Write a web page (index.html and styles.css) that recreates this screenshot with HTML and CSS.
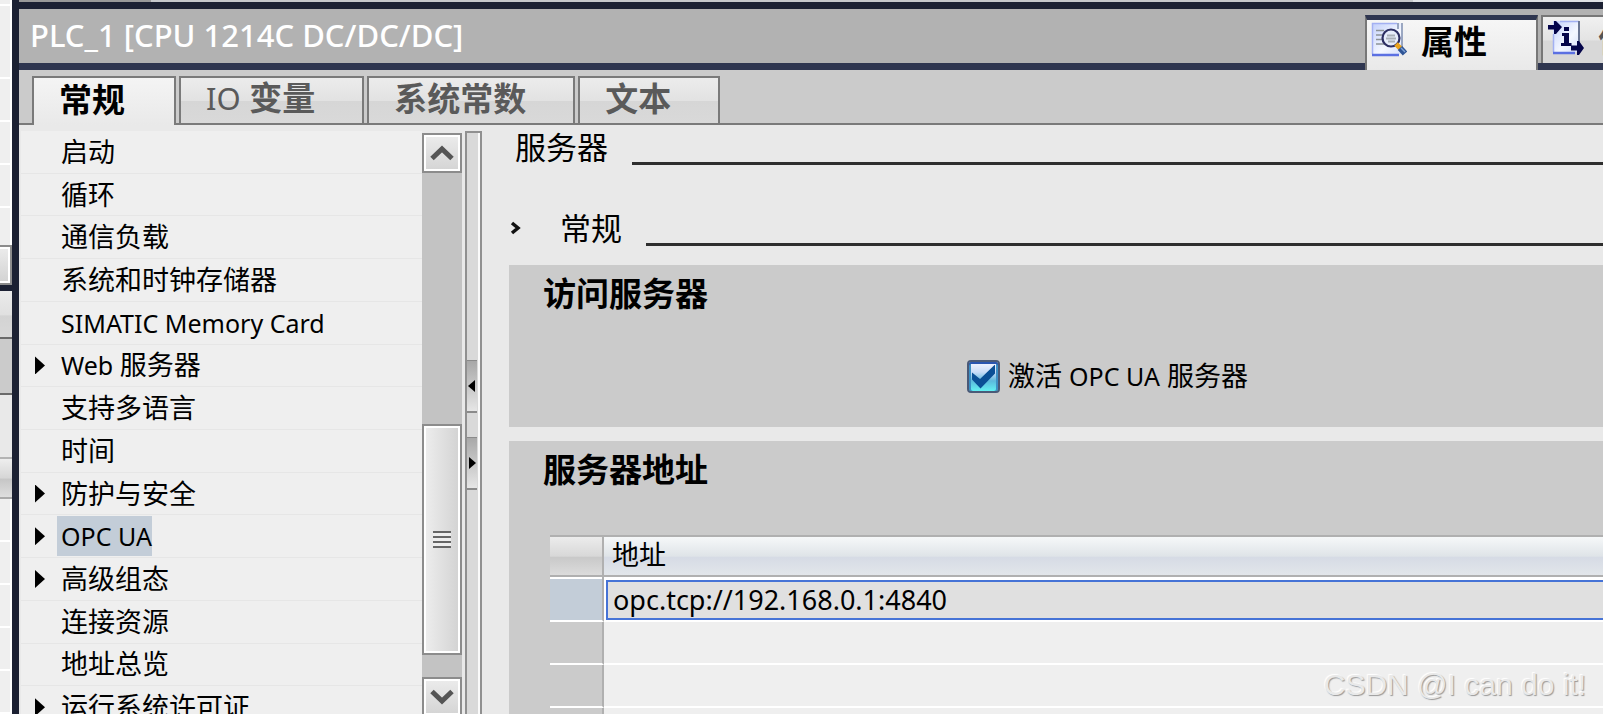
FILE: index.html
```html
<!DOCTYPE html>
<html lang="zh-CN">
<head>
<meta charset="utf-8">
<title>PLC_1 [CPU 1214C DC/DC/DC]</title>
<link rel="stylesheet" href="styles.css">
</head>
<body>
<div class="app">
  <aside class="neighbour">
    <div class="nb-rows nb-top"></div>
    <div class="nb-corner"></div>
    <div class="nb-gap"></div>
    <div class="nb-head"></div>
    <div class="nb-bar"></div>
    <div class="nb-blank"></div>
    <div class="nb-colhead"></div>
    <div class="nb-rows nb-bottom"></div>
  </aside>
  <main class="inspector">
    <div class="above"><i class="above-left"></i><i class="above-mid"></i><i class="above-right"></i></div>
    <header class="titlebar">
      <h1 class="title">PLC_1 [CPU 1214C DC/DC/DC]</h1>
      <div class="views" role="tablist">
        <button class="view view-on" role="tab" aria-selected="true">
          <svg class="view-icon" viewBox="0 0 36 36" aria-hidden="true">
            <defs><linearGradient id="page" x1="0" y1="0" x2="1" y2="1"><stop offset="0" stop-color="#c3d0fb"/><stop offset=".6" stop-color="#f4f7ff"/><stop offset="1" stop-color="#d5defb"/></linearGradient></defs>
            <path d="M1 1h28l3 3v28H1z" fill="url(#page)"/>
            <path d="M1.500 32V1.500H26" fill="none" stroke="#a3b0f2" stroke-width="1.500"/>
            <path d="M27 1v6M31 1v24" stroke="#7f8fae" stroke-width="1.500"/>
            <path d="M1 33h27" stroke="#5b70e2" stroke-width="2.500"/>
            <path d="M5 8.500h8M5 13h6M5 17.500h6M5 22h8" stroke="#8c9296" stroke-width="1.700"/>
            <circle cx="20" cy="16" r="8.500" fill="#e6ecfb" stroke="#2d2f63" stroke-width="2.200"/>
            <path d="M16 13.500h8M15 16.500h10M17 19.500h7" stroke="#a9b0b8" stroke-width="2"/>
            <path d="M25 22l5 5" stroke="#eaa21c" stroke-width="5"/>
            <path d="M29 26l5 5.500" stroke="#2f5596" stroke-width="6"/>
            <path d="M30 26l4 4" stroke="#7fa3d6" stroke-width="1.500"/>
          </svg>
          属性
        </button>
        <button class="view" role="tab" aria-selected="false">
          <svg class="view-icon" viewBox="0 0 36 36" aria-hidden="true">
            <path d="M5 1h26v31H5z" fill="url(#page)"/>
            <path d="M12 1.500h19" stroke="#a3b0f2" stroke-width="1.500"/>
            <path d="M31 1v23" stroke="#6c7794" stroke-width="2"/>
            <path d="M5.500 14v18" stroke="#a3b0f2" stroke-width="1.500"/>
            <path d="M5 33h22" stroke="#5b70e2" stroke-width="2.500"/>
            <path d="M0 5h6V1h2l6 6-6 7H6V9.500H0z" fill="#05054a"/>
            <path d="M23 25.500h6V21h2l5 7-5 7h-2v-4.500h-6z" fill="#05054a"/>
            <path d="M16 7h5v4h-5zM14 13h7v10h2.500v3H13v-3h3v-7h-2z" fill="#05054a"/>
          </svg>
          信息
        </button>
      </div>
    </header>
    <nav class="tabs" role="tablist">
      <button class="tab tab-on" role="tab" aria-selected="true">常规</button>
      <button class="tab" role="tab"><span class="latin-lg">IO</span> 变量</button>
      <button class="tab" role="tab">系统常数</button>
      <button class="tab" role="tab">文本</button>
    </nav>
    <div class="body">
      <nav class="tree">
        <ul class="tree-list">
          <li class="node"><a class="label" href="#">启动</a></li>
          <li class="node"><a class="label" href="#">循环</a></li>
          <li class="node"><a class="label" href="#">通信负载</a></li>
          <li class="node"><a class="label" href="#">系统和时钟存储器</a></li>
          <li class="node"><a class="label" href="#"><span class="latin">SIMATIC Memory Card</span></a></li>
          <li class="node parent"><a class="label" href="#"><span class="latin">Web </span>服务器</a></li>
          <li class="node"><a class="label" href="#">支持多语言</a></li>
          <li class="node"><a class="label" href="#">时间</a></li>
          <li class="node parent"><a class="label" href="#">防护与安全</a></li>
          <li class="node parent"><a class="label selected" href="#"><span class="latin">OPC UA</span></a></li>
          <li class="node parent"><a class="label" href="#">高级组态</a></li>
          <li class="node"><a class="label" href="#">连接资源</a></li>
          <li class="node"><a class="label" href="#">地址总览</a></li>
          <li class="node parent"><a class="label" href="#">运行系统许可证</a></li>
        </ul>
      </nav>
      <div class="scrollbar">
        <button class="sb-btn" aria-label="向上滚动"><svg class="sb-arrow" viewBox="0 0 24 16" aria-hidden="true"><path d="M2 13.500L12 4l10 9.500" fill="none" stroke="#555" stroke-width="5"/></svg></button>
        <div class="sb-before"></div>
        <div class="sb-thumb"><i class="grip"></i></div>
        <div class="sb-after"></div>
        <button class="sb-btn" aria-label="向下滚动"><svg class="sb-arrow" viewBox="0 0 24 16" aria-hidden="true"><path d="M2 2.500L12 12l10-9.500" fill="none" stroke="#555" stroke-width="5"/></svg></button>
      </div>
      <div class="splitter">
        <button class="split-btn" aria-label="收起"><svg class="split-arrow" viewBox="0 0 8 12" aria-hidden="true"><path d="M7 0v12L0 6z"/></svg></button>
        <button class="split-btn" aria-label="展开"><svg class="split-arrow" viewBox="0 0 8 12" aria-hidden="true"><path d="M1 0v12l7-6z"/></svg></button>
      </div>
      <section class="content">
        <h2 class="heading">服务器</h2>
        <h3 class="heading sub">
          <svg class="chevron" viewBox="0 0 12 14" aria-hidden="true"><path d="M2 2l6 5-6 5" fill="none" stroke="#111" stroke-width="3.500"/></svg>常规</h3>
        <section class="panel">
          <h4 class="panel-title">访问服务器</h4>
          <label class="check"><input class="check-box" type="checkbox" checked><span>激活 <span class="latin">OPC UA</span> 服务器</span></label>
        </section>
        <section class="panel panel-fill">
          <h4 class="panel-title">服务器地址</h4>
          <table class="grid">
            <thead><tr><th class="mark"></th><th class="col">地址</th></tr></thead>
            <tbody>
              <tr><td class="mark mark-on"></td><td class="cell cell-edit"><input class="address" type="text" aria-label="地址" value="opc.tcp://192.168.0.1:4840"></td></tr>
              <tr><td class="mark"></td><td class="cell"></td></tr>
              <tr><td class="mark"></td><td class="cell"></td></tr>
              <tr><td class="mark"></td><td class="cell"></td></tr>
            </tbody>
          </table>
        </section>
      </section>
    </div>
  </main>
  <div class="watermark">CSDN @I can do it!</div>
</div>
</body>
</html>
```
FILE: styles.css
```css
* { box-sizing: border-box; }

body {
  margin: 0;
  font-family: "Noto Sans", "Noto Sans CJK SC", sans-serif;
  font-size: 27px;
  color: #000;
}

button, input {
  font: inherit;
  color: inherit;
  margin: 0;
  border-radius: 0;
}

h1, h2, h3, h4, ul { margin: 0; padding: 0; }

.app {
  position: relative;
  display: flex;
  height: 100vh;
  overflow: hidden;
  background: #e9e9e9;
}

.latin { font-size: 25px; }
.latin-lg { font-size: 31px; font-weight: 400; }

/* Edge of the neighbouring editor */
.neighbour {
  flex: none;
  display: flex;
  flex-direction: column;
  width: 12px;
  background: #efefef;
}
.nb-rows {
  border-right: 2px solid #fff;
  background: repeating-linear-gradient(#efefef 0 41px, #fff 41px 43px);
}
.nb-top { height: 245px; background-position: 0 36px; }
.nb-corner {
  height: 40px;
  border: 2px solid #8c8c8c;
  border-left: 0;
  box-shadow: inset -2px 0 #fff, inset 0 2px #fff, inset 0 -2px #fff;
  background: linear-gradient(#ececec, #d2d2d2);
}
.nb-gap { height: 6px; background: #1c2133; }
.nb-head { height: 48px; background: linear-gradient(#ebebeb, #e0e0e0 52%, #d3d3d3 54%, #d8d8d8); border-bottom: 2px solid #6a6a6a; }
.nb-bar { height: 56px; background: #cbcbcb; border-bottom: 2px solid #6a6a6a; }
.nb-blank { height: 64px; background: #e9e9e9; border-bottom: 2px solid #b4b4b4; }
.nb-colhead { height: 40px; background: linear-gradient(#eee, #d6d6d6 50%, #c6c6c6 53%, #dedede); border-bottom: 2px solid #aaa; }
.nb-bottom { flex: 1; }

/* Inspector window */
.inspector {
  flex: 1;
  min-width: 0;
  display: flex;
  flex-direction: column;
  border-left: 7px solid #1c2133;
}
.above { flex: none; display: flex; height: 2px; background: #c6c8cb; }
.above-left { width: 132px; background: #999; }
.above-mid { flex: 1; }
.above-right { width: 190px; background: #dfe2e5; }

.titlebar {
  flex: none;
  display: flex;
  justify-content: space-between;
  height: 68px;
  border-top: 7px solid #1c2133;
  border-bottom: 7px solid #2f3650;
  background: #b2b2b2;
}
.title {
  padding-left: 11px;
  font-size: 31px;
  font-weight: 500;
  line-height: 52px;
  color: #fff;
  white-space: nowrap;
}
.views { display: flex; gap: 3px; width: 238px; padding-top: 6px; }
.view {
  flex: none;
  display: flex;
  align-items: center;
  gap: 14px;
  height: 48px;
  width: 173px;
  padding: 0 5px 4px;
  border: 2px solid #777;
  border-bottom: 0;
  background: linear-gradient(#f0f0f0, #e4e4e4 50%, #d8d8d8 52%, #d8d8d8);
  font-size: 33px;
  font-weight: 700;
  color: #555;
}
.view-on {
  height: 55px;
  padding: 0 4px 11px;
  border-top: 5px solid #2f3650;
  background: linear-gradient(#f6f6f6, #e9e9e9);
  color: #000;
}
.view-icon { flex: none; width: 36px; height: 36px; }

.tabs {
  flex: none;
  display: flex;
  align-items: stretch;
  gap: 3px;
  height: 55px;
  padding: 6px 0 0 13px;
  background: linear-gradient(#7a7a7a, #7a7a7a) bottom / 100% 2px no-repeat #cbcbcb;
}
.tab {
  padding: 0 47px 5px 25px;
  border: 2px solid #7a7a7a;
  background: linear-gradient(#ececec, #e2e2e2 50%, #d6d6d6 52%, #d9d9d9);
  font-size: 33px;
  font-weight: 700;
  line-height: 37px;
  color: #5a5a5a;
  white-space: nowrap;
}
.tab-on {
  padding-right: 49px;
  border-bottom: 0;
  background: linear-gradient(#f4f4f4, #e9e9e9);
  color: #000;
}

.body { flex: 1; min-height: 0; display: flex; }

/* Navigation tree */
.tree { flex: none; width: 403px; padding: 6px 0 0 2px; overflow: hidden; }
.tree-list {
  display: flex;
  flex-direction: column;
  height: 598px;
  list-style: none;
  background: #efefef;
}
.node {
  flex: 1;
  min-height: 0;
  display: flex;
  align-items: center;
  padding-left: 36px;
  border-bottom: 1px solid #e6e6e6;
}
.parent { padding-left: 14px; }
.parent::before {
  content: "";
  width: 10px;
  height: 18px;
  margin-right: 12px;
  background: #000;
  clip-path: polygon(0 0, 100% 50%, 0 100%);
}
.label {
  padding-left: 4px;
  line-height: 40px;
  color: #000;
  text-decoration: none;
  white-space: nowrap;
}
.selected { background: #c3cdd8; }

/* Scroll bar */
.scrollbar {
  flex: none;
  display: flex;
  flex-direction: column;
  width: 40px;
  margin-top: 8px;
  background: #c3c3c3;
}
.sb-btn, .sb-thumb {
  flex: none;
  display: flex;
  align-items: center;
  justify-content: center;
  padding: 0;
  border: 2px solid #8c8c8c;
  box-shadow: inset 0 0 0 2px #fff;
}
.sb-btn { height: 40px; background: linear-gradient(#ececec, #d4d4d4); }
.sb-arrow { width: 24px; height: 16px; }
.sb-before { flex: 254; }
.sb-thumb { flex: 230; background: linear-gradient(90deg, #eee, #d2d2d2); }
.sb-after { flex: 22; }
.scrollbar .sb-btn:last-child { margin-bottom: -3px; }
.grip {
  width: 18px;
  height: 17px;
  background: repeating-linear-gradient(#666 0 2px, #eee 2px 5px);
}

/* Splitter */
.splitter {
  flex: none;
  display: flex;
  flex-direction: column;
  gap: 24px;
  width: 17px;
  margin: 6px 0 0 3px;
  padding: 227px 3px 0 0;
  border: 2px solid #909090;
  border-bottom: 0;
  box-shadow: inset -2px 0 #fafafa;
  background: #d9d9d9;
}
.split-btn {
  display: flex;
  align-items: center;
  justify-content: center;
  height: 53px;
  padding: 0;
  border: 0;
  border-top: 1px solid #8a8a8a;
  border-bottom: 2px solid #8a8a8a;
  background: linear-gradient(#a8a8a8, #e6e6e6);
}
.split-arrow { width: 8px; height: 12px; }

/* Property page */
.content {
  flex: 1;
  min-width: 0;
  display: flex;
  flex-direction: column;
  padding: 4px 0 0 27px;
}
.heading {
  display: flex;
  align-items: center;
  height: 40px;
  padding-left: 6px;
  font-size: 31px;
  font-weight: 400;
  line-height: 36px;
  padding-bottom: 4px;
  white-space: nowrap;
}
.heading::after {
  content: "";
  flex: 1;
  align-self: flex-end;
  height: 3px;
  margin-left: 24px;
  background: #2e2e2e;
}
.sub { margin: 41px 0 15px; padding-left: 1px; }
.chevron { width: 12px; height: 14px; margin-right: 38px; }

.panel { background: #cbcbcb; padding: 8px 0 0 34px; height: 162px; margin-bottom: 14px; }
.panel-fill { flex: 1; margin-bottom: 0; min-height: 0; }
.panel-title { font-size: 33px; font-weight: 700; line-height: 42px; }
.check {
  display: flex;
  align-items: center;
  gap: 8px;
  margin: 41px 0 0 40%;
  line-height: 40px;
  white-space: nowrap;
}
.check-box {
  appearance: none;
  width: 33px;
  height: 33px;
  border: 2px solid #4a5a78;
  border-radius: 4px;
  box-shadow: inset 0 2px #2a55b0, inset 2px 0 #3d8fc4, inset -2px 0 #3d8fc4;
  background: linear-gradient(#f4f5ff, #c9dcf8 35%, #5cb8dc 65%, #62f0f2);
}
.check-box:checked::before {
  content: "";
  display: block;
  width: 23px;
  height: 24px;
  margin: 3px;
  background: #0a4f96;
  clip-path: polygon(0 33%, 35% 60%, 100% 0, 100% 38%, 37% 100%, 0 62%);
}

.grid {
  width: calc(100% - 7px);
  margin: 44px 0 0 7px;
  border-collapse: separate;
  border-spacing: 0;
  table-layout: fixed;
}
.grid th {
  height: 42px;
  padding: 0 0 2px;
  border-top: 2px solid #b0b0b0;
  border-bottom: 2px solid #b0b0b0;
  font-weight: 400;
  line-height: 36px;
  text-align: left;
}
.grid .mark { width: 54px; padding: 0; border-right: 2px solid #b0b0b0; }
.grid th.mark { background: linear-gradient(#ececec, #d8d8d8 50%, #c9c9c9 54%, #dcdcdc); }
.grid th.col { padding-left: 8px; background: linear-gradient(#f6f8f9, #dfe4e8 50%, #d6dbe5 54%, #e2e6ea); }
.grid td { height: 43px; padding: 0; border-bottom: 2px solid #fff; }
.cell { background: #efefef; }
.grid td.mark-on { background: #c3cdd8; box-shadow: inset 0 2px #fff; }
.grid .cell-edit { padding: 3px 0 0 2px; background: #fff; }
.address {
  display: block;
  width: calc(100% + 4px);
  height: 40px;
  padding: 0 0 2px 5px;
  border: 2px solid #4673d6;
  outline: 0;
  background: #e0e0e0;
}

.watermark {
  position: absolute;
  right: 17px;
  bottom: 12px;
  font-family: "Liberation Sans", sans-serif;
  font-size: 30px;
  line-height: 34px;
  color: #e9e9e9;
  text-shadow: 1px 1px 1px #999, -1px -1px 1px #fff;
}
```
